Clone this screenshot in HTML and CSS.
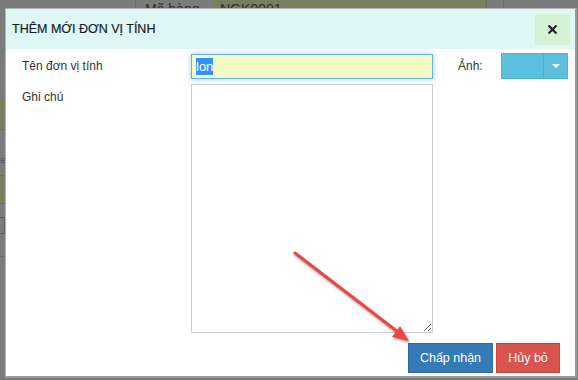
FILE: index.html
```html
<!DOCTYPE html>
<html lang="vi">
<head>
    <meta charset="UTF-8">
    <title>Thêm mới đơn vị tính</title>
    <link rel="stylesheet" href="styles.css">
</head>
<body>
    <div class="page">
        <div class="page-top">
            <div class="cell cell-a"></div>
            <div class="cell cell-label">Mã hàng</div>
            <div class="cell cell-value">NGK0001</div>
            <div class="cell cell-b"></div>
            <div class="cell cell-c"></div>
        </div>
        <div class="page-left">
            <div class="band olive b1"></div>
            <div class="band line"></div>
            <div class="band grey b2"><span class="menu">≡</span></div>
            <div class="band line"></div>
            <div class="band olive b3"></div>
            <div class="band line"></div>
            <div class="band grey b4"><span class="mini-box"></span></div>
            <div class="band line"></div>
        </div>
    </div>

    <div class="modal">
        <div class="modal-header">
            <h4 class="modal-title">THÊM MỚI ĐƠN VỊ TÍNH</h4>
            <button class="btn-close">
                <svg width="9" height="9" viewBox="0 0 9 9">
                    <path d="M1.3 1.3 L7.7 7.7 M7.7 1.3 L1.3 7.7" stroke="#222" stroke-width="2.2" stroke-linecap="square"/>
                </svg>
            </button>
        </div>
        <div class="modal-body">
            <div class="form-row">
                <label class="form-label">Tên đơn vị tính</label>
                <div class="text-input"><span class="selected">lon</span></div>
                <label class="img-label">Ảnh:</label>
                <div class="dropdown">
                    <span class="dropdown-main"></span>
                    <span class="dropdown-toggle"><span class="caret"></span></span>
                </div>
            </div>
            <div class="form-row note-row">
                <label class="form-label note-label">Ghi chú</label>
                <textarea class="note"></textarea>
            </div>
        </div>
        <div class="modal-footer">
            <button class="btn btn-primary">Chấp nhận</button>
            <button class="btn btn-danger">Hủy bỏ</button>
        </div>
    </div>

    <svg class="arrow" width="578" height="380" viewBox="0 0 578 380">
        <line x1="295" y1="253" x2="398" y2="332" stroke="#ef4444" stroke-width="3" stroke-linecap="round"/>
        <polygon points="409,341 392,337 400,326" fill="#ef4444"/>
    </svg>
</body>
</html>
```

FILE: styles.css
```css
/* Global Styles */
body {
    margin: 0;
    width: 578px;
    height: 380px;
    overflow: hidden;
    background-color: #7b7b7b;
    font-family: "Liberation Sans", Arial, sans-serif;
    font-size: 12px;
    color: #333;
    position: relative;
}

/* Page behind the dialog */
.page-top {
    display: flex;
    height: 10px;
}

.cell {
    height: 100%;
    box-sizing: border-box;
}

.cell-a {
    width: 136px;
    border-right: 1px solid #6a6a6a;
}

.cell-label {
    width: 78px;
    padding-left: 9px;
    color: #2e2e2e;
    font-size: 14px;
    line-height: 18px;
}

.cell-value {
    width: 273px;
    background-color: #7a7d5e;
    padding-left: 6px;
    color: #2e2e2e;
    font-size: 14px;
    line-height: 18px;
    border-right: 1px solid #6a6a6a;
}

.cell-b {
    width: 17px;
    border-right: 1px solid #6a6a6a;
}

.cell-c {
    flex: 1;
}

.page-left {
    width: 6px;
    padding-top: 90px;
}

.band.line {
    height: 1px;
    background-color: #6a6a6a;
}

.band.olive {
    background-color: #7a7d5e;
}

.b1 { height: 29px; }
.b2 { height: 45px; }
.b3 { height: 27px; }
.b4 { height: 39px; }

.menu {
    color: #5a4a6a;
    font-size: 10px;
    line-height: 10px;
    display: block;
    padding-top: 26px;
}

.mini-box {
    display: block;
    width: 4px;
    height: 15px;
    margin-top: 13px;
    border: 1px solid #5e5e5e;
    border-left: none;
}

/* Dialog */
.modal {
    position: absolute;
    left: 5px;
    top: 8px;
    width: 572px;
    height: 370px;
    box-sizing: border-box;
    background-color: #fff;
    border: 1px solid #b5b5b5;
    border-bottom-width: 2px;
    border-right-width: 2px;
    border-right-color: #9a9a9a;
    border-bottom-color: #9a9a9a;
    display: flex;
    flex-direction: column;
}

.modal-header {
    height: 40px;
    background-color: #e0f8f5;
    display: flex;
    align-items: center;
    justify-content: space-between;
    padding: 0 5px 0 6px;
}

.modal-title {
    margin: 0;
    font-size: 12.5px;
    font-weight: normal;
    color: #16202a;
    -webkit-text-stroke: 0.2px #16202a;
}

.btn-close {
    width: 35px;
    height: 31px;
    border: none;
    background-color: #d5f2d2;
    display: flex;
    align-items: center;
    justify-content: center;
    padding: 0;
}

.modal-body {
    padding: 4px 0 0 16px;
}

.form-row {
    display: flex;
    align-items: center;
}

.form-label {
    width: 169px;
    color: #333;
}

.text-input {
    width: 242px;
    height: 25px;
    box-sizing: border-box;
    border: 1px solid #66afe9;
    background-color: #f1fcc5;
    box-shadow: 0 0 6px rgba(102, 175, 233, 0.6);
    padding: 4px 0 0 4px;
    font-size: 13px;
    line-height: 15px;
}

.selected {
    background-color: #3390ff;
    color: #fff;
    padding: 1px 0;
}

.img-label {
    margin-left: 25px;
    width: 43px;
    color: #333;
}

.dropdown {
    display: flex;
    height: 26px;
    width: 67px;
    box-sizing: border-box;
    border: 1px solid #46b8da;
    background-color: #5bc0de;
}

.dropdown-main {
    width: 41px;
    border-right: 1px solid #46b0d0;
}

.dropdown-toggle {
    flex: 1;
    display: flex;
    align-items: center;
    justify-content: center;
}

.caret {
    width: 0;
    height: 0;
    border-left: 4px solid transparent;
    border-right: 4px solid transparent;
    border-top: 4px solid #fff;
}

.note-row {
    align-items: flex-start;
    margin-top: 5px;
}

.note-label {
    padding-top: 6px;
}

.note {
    width: 242px;
    height: 249px;
    box-sizing: border-box;
    border: 1px solid #ccc;
    margin: 0;
    font-family: "Liberation Sans", Arial, sans-serif;
}

.modal-footer {
    display: flex;
    justify-content: flex-end;
    gap: 3px;
    padding: 10px 15px 0 0;
}

.btn {
    height: 30px;
    border: 1px solid transparent;
    color: #fff;
    font-family: "Liberation Sans", Arial, sans-serif;
    font-size: 12.5px;
    padding: 0;
    white-space: nowrap;
}

.btn-primary {
    width: 85px;
    background-color: #337ab7;
    border-color: #2e6da4;
}

.btn-danger {
    width: 64px;
    background-color: #d9534f;
    border-color: #d43f3a;
}

/* Annotation arrow */
.arrow {
    position: absolute;
    left: 0;
    top: 0;
    filter: drop-shadow(1px 2px 1px rgba(0, 0, 0, 0.35));
    pointer-events: none;
}
```
